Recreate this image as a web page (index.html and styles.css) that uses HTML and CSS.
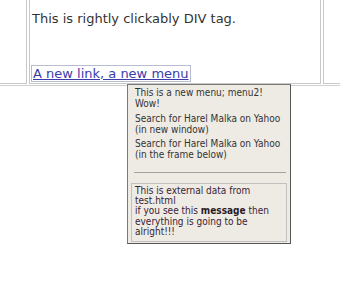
FILE: index.html
```html
<!DOCTYPE html>
<html>
<head>
<meta charset="utf-8">
<link rel="stylesheet" href="styles.css">
</head>
<body>
<div class="tbl">
  <div class="cell side-left"></div>
  <div class="cell main">
    <p class="lead">This is rightly clickably DIV tag.</p>
    <a class="menulink" href="#">A new link, a new menu</a>
  </div>
  <div class="cell side-right"></div>
</div>
<div class="menu">
  <div class="item">This is a new menu; menu2!<br>Wow!</div>
  <div class="item">Search for Harel Malka on Yahoo<br>(in new window)</div>
  <div class="item">Search for Harel Malka on Yahoo<br>(in the frame below)</div>
  <div class="sep"></div>
  <div class="ext">This is external data from<br>test.html<br>if you see this <b>message</b> then<br>everything is going to be<br>alright!!!</div>
</div>
</body>
</html>
```
FILE: styles.css
```css
html, body {
  margin: 0;
  padding: 0;
  background: #ffffff;
}
body {
  width: 340px;
  height: 296px;
  overflow: hidden;
  position: relative;
  font-family: "DejaVu Sans", sans-serif;
}
.tbl {
  display: flex;
  gap: 2px;
  height: 86px;
  box-sizing: border-box;
  border-bottom: 1px solid #d0d0d0;
}
.cell {
  box-sizing: border-box;
  height: 84px;
  border: 1px solid #c8c8c8;
  border-top: none;
}
.side-left {
  width: 27px;
  border-left: none;
}
.side-right {
  flex: 1;
  border-right: none;
}
.main {
  width: 292px;
  padding: 11px 0 1px 1px;
  display: flex;
  flex-direction: column;
  justify-content: space-between;
  align-items: flex-start;
}
.lead {
  margin: 0 0 0 1px;
  font-size: 13px;
  line-height: 15px;
  color: #333333;
}
.menulink {
  display: inline-block;
  border: 1px solid #b8bcd0;
  padding: 0 1px;
  font-size: 13px;
  line-height: 15px;
  color: #3b3bab;
  text-decoration: underline;
}
.menu {
  position: absolute;
  left: 127px;
  top: 84px;
  width: 164px;
  box-sizing: border-box;
  background: #eeebe5;
  border: 1px solid #7a7a7a;
  border-right-color: #555555;
  border-bottom-color: #555555;
  padding: 2px 3px 1px 3px;
  color: #333333;
  font-family: "DejaVu Sans Condensed", "DejaVu Sans", sans-serif;
  font-size: 10px;
  line-height: 11px;
  display: flex;
  flex-direction: column;
  gap: 3.7px;
}
.item {
  padding-left: 4px;
}
.sep {
  margin: 8px 1px 6px 3px;
  border-top: 1px solid #a0a0a0;
}
.ext {
  border: 1px solid #c0c0c0;
  padding: 2px 3px 4px 3px;
  font-size: 10px;
  line-height: 10.25px;
  color: #3b2233;
}
.ext b {
  color: #2a1a22;
}
```
